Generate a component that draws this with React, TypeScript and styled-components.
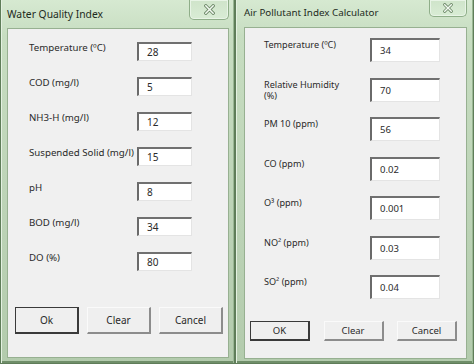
import React from "react";
import styled, { createGlobalStyle } from "styled-components";

const Global = createGlobalStyle`
  html, body { margin: 0; padding: 0; background: #6f8a69; }
  body { width: 474px; height: 364px; overflow: hidden; font-family: "Noto Sans", "Liberation Sans", sans-serif; }
`;

const Desk = styled.div`
  display: flex;
  width: 474px;
  height: 364px;
  background: #4f6b4a;
`;

const Frame = styled.div<{ $w: number; $pl: number; $pr: number; $pb: number }>`
  width: ${(p) => p.$w}px;
  height: 364px;
  box-sizing: border-box;
  display: flex;
  flex-direction: column;
  padding: 0 ${(p) => p.$pr}px ${(p) => p.$pb}px ${(p) => p.$pl}px;
  background: linear-gradient(180deg, #d6e9d1 0%, #c7ddc1 10%, #bcd3b6 60%, #b3cbad 100%);
  border: 1px solid #5f7d59;
  border-top: none;
  box-shadow: inset 1px 0 0 #e4f1e1, inset -1px 0 0 #9ab794, inset 0 -2px 0 #6f8e69;
`;

const TitleBar = styled.div<{ $h: number }>`
  height: ${(p) => p.$h}px;
  display: flex;
  align-items: flex-start;
  justify-content: space-between;
  flex-shrink: 0;
`;

const Title = styled.span<{ $top: number; $size: number }>`
  margin-top: ${(p) => p.$top}px;
  font-size: ${(p) => p.$size}px;
  color: #1d2a1c;
  white-space: nowrap;
`;

const CloseBtn = styled.div<{ $w: number; $h: number }>`
  width: ${(p) => p.$w}px;
  height: ${(p) => p.$h}px;
  box-sizing: border-box;
  border: 1px solid #8fae89;
  border-top: none;
  border-radius: 0 0 5px 5px;
  background: linear-gradient(180deg, #cfe4ca, #d9ecd5);
  box-shadow: inset 0 0 0 1px #e8f4e6;
  display: flex;
  align-items: center;
  justify-content: center;
`;

const Client = styled.div`
  flex: 1;
  display: flex;
  flex-direction: column;
  box-sizing: border-box;
  background: #f0f0f0;
  border: 1px solid #97b091;
`;

const Fields = styled.div<{ $row: number; $lab: number; $pt: number; $pl: number }>`
  display: grid;
  grid-template-columns: ${(p) => p.$lab}px auto;
  grid-auto-rows: ${(p) => p.$row}px;
  align-items: start;
  padding: ${(p) => p.$pt}px 0 0 ${(p) => p.$pl}px;
`;

const Label = styled.span<{ $size: number; $top: number; $max: number }>`
  font-size: ${(p) => p.$size}px;
  line-height: ${(p) => p.$size + 2.5}px;
  margin-top: ${(p) => p.$top}px;
  max-width: ${(p) => p.$max}px;
  color: #2a2a2a;
`;

const Field = styled.div<{ $w: number; $h: number; $size: number; $pl: number }>`
  width: ${(p) => p.$w}px;
  height: ${(p) => p.$h}px;
  box-sizing: border-box;
  background: #ffffff;
  border-top: 2px solid #707070;
  border-left: 2px solid #6a6a6a;
  border-right: 1px solid #e4e4e4;
  border-bottom: 1px solid #e4e4e4;
  font-size: ${(p) => p.$size}px;
  color: #2a2a2a;
  padding-left: ${(p) => p.$pl}px;
  display: flex;
  align-items: center;
`;

const Footer = styled.div<{ $pl: number; $pr: number; $pb: number }>`
  margin-top: auto;
  display: flex;
  justify-content: space-between;
  padding: 0 ${(p) => p.$pr}px ${(p) => p.$pb}px ${(p) => p.$pl}px;
`;

const Button = styled.div<{ $w: number; $h: number; $def?: boolean; $size: number }>`
  width: ${(p) => p.$w}px;
  height: ${(p) => p.$h}px;
  box-sizing: border-box;
  background: #efefef;
  font-size: ${(p) => p.$size}px;
  color: #2a2a2a;
  display: flex;
  align-items: center;
  justify-content: center;
  border-top: 1px solid ${(p) => (p.$def ? "#3a3a3a" : "#fafafa")};
  border-left: 1px solid ${(p) => (p.$def ? "#3a3a3a" : "#fafafa")};
  border-right: 2px solid ${(p) => (p.$def ? "#3a3a3a" : "#8c8c8c")};
  border-bottom: 2px solid ${(p) => (p.$def ? "#3a3a3a" : "#8c8c8c")};
`;

const XIcon = ({ s }: { s: number }) => (
  <svg width={s} height={s} viewBox="0 0 12 12">
    <path d="M2 2 L10 10 M10 2 L2 10" stroke="#6e8a69" strokeWidth="3.6" strokeLinecap="square" />
    <path d="M2 2 L10 10 M10 2 L2 10" stroke="#f4faf3" strokeWidth="1.6" strokeLinecap="square" />
  </svg>
);

const leftRows = [
  ["Temperature (ºC)", "28"],
  ["COD (mg/l)", "5"],
  ["NH3-H (mg/l)", "12"],
  ["Suspended Solid (mg/l)", "15"],
  ["pH", "8"],
  ["BOD (mg/l)", "34"],
  ["DO (%)", "80"],
];

const rightRows = [
  ["Temperature (ºC)", "34"],
  ["Relative Humidity (%)", "70"],
  ["PM 10 (ppm)", "56"],
  ["CO (ppm)", "0.02"],
  ["O³ (ppm)", "0.001"],
  ["NO² (ppm)", "0.03"],
  ["SO² (ppm)", "0.04"],
];

export default function App() {
  return (
    <>
      <Global />
      <Desk>
        <Frame $w={235} $pl={6} $pr={5} $pb={5}>
          <TitleBar $h={28}>
            <Title $top={7} $size={10.3}>Water Quality Index</Title>
            <CloseBtn $w={40} $h={20}>
              <XIcon s={11} />
            </CloseBtn>
          </TitleBar>
          <Client>
            <Fields $row={35} $lab={108} $pt={13} $pl={21}>
              {leftRows.map(([l, v]) => (
                <React.Fragment key={l}>
                  <Label $size={9.7} $top={0} $max={110} style={{ whiteSpace: "nowrap" }}>{l}</Label>
                  <Field $w={55} $h={19} $size={10} $pl={8}>{v}</Field>
                </React.Fragment>
              ))}
            </Fields>
            <Footer $pl={7} $pr={5} $pb={23}>
              <Button $w={64} $h={27} $def $size={10}>Ok</Button>
              <Button $w={64} $h={27} $size={10}>Clear</Button>
              <Button $w={64} $h={27} $size={10}>Cancel</Button>
            </Footer>
          </Client>
        </Frame>
        <Frame $w={239} $pl={8} $pr={6} $pb={4}>
          <TitleBar $h={27}>
            <Title $top={6} $size={9.8}>Air Pollutant Index Calculator</Title>
            <CloseBtn $w={38} $h={17}>
              <XIcon s={10} />
            </CloseBtn>
          </TitleBar>
          <Client>
            <Fields $row={39.5} $lab={106} $pt={10} $pl={19}>
              {rightRows.map(([l, v]) => (
                <React.Fragment key={l}>
                  <Label $size={9.1} $top={1} $max={84}>{l}</Label>
                  <Field $w={70} $h={24} $size={9.5} $pl={8}>{v}</Field>
                </React.Fragment>
              ))}
            </Fields>
            <Footer $pl={5} $pr={9} $pb={17}>
              <Button $w={60} $h={20} $def $size={9.5}>OK</Button>
              <Button $w={60} $h={20} $size={9.5}>Clear</Button>
              <Button $w={60} $h={20} $size={9.5}>Cancel</Button>
            </Footer>
          </Client>
        </Frame>
      </Desk>
    </>
  );
}
